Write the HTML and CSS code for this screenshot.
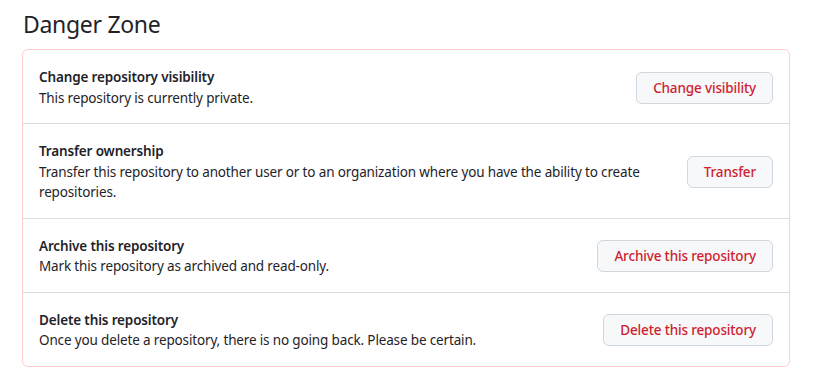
FILE: index.html
```html
<!DOCTYPE html>
<html>
  <head>
    <meta charset="UTF-8">
    <title>Danger Zone</title>
    <link rel="stylesheet" href="styles.css">
  </head>
  <body>
    <div class="settings">
      <h2 class="subhead">Danger Zone</h2>
      <div class="danger-box">
        <div class="danger-row">
          <div class="danger-text">
            <strong>Change repository visibility</strong>
            <p>This repository is currently private.</p>
          </div>
          <button class="btn-danger">Change visibility</button>
        </div>
        <div class="danger-row">
          <div class="danger-text">
            <strong>Transfer ownership</strong>
            <p>Transfer this repository to another user or to an organization where you have the ability to create repositories.</p>
          </div>
          <button class="btn-danger">Transfer</button>
        </div>
        <div class="danger-row">
          <div class="danger-text">
            <strong>Archive this repository</strong>
            <p>Mark this repository as archived and read-only.</p>
          </div>
          <button class="btn-danger">Archive this repository</button>
        </div>
        <div class="danger-row">
          <div class="danger-text">
            <strong>Delete this repository</strong>
            <p>Once you delete a repository, there is no going back. Please be certain.</p>
          </div>
          <button class="btn-danger">Delete this repository</button>
        </div>
      </div>
    </div>
  </body>
</html>
```
FILE: styles.css
```css
html { font-family: 'Noto Sans', sans-serif; }
body {
  margin: 0;
  background: #ffffff;
  color: #1f2328;
  font-size: 13.5px;
  line-height: 20.5px;
  letter-spacing: -0.15px;
}
.settings {
  padding: 6px 23px 0 22px;
}
.subhead {
  margin: 0 0 7px 1px;
  font-size: 23px;
  line-height: 36px;
  font-weight: 400;
  letter-spacing: -0.3px;
}
.danger-box {
  border: 1px solid #ffcecb;
  border-radius: 6px;
}
.danger-row {
  display: flex;
  align-items: center;
  gap: 16px;
  padding: 17px 16px 15px;
  border-top: 1px solid #d8dee4;
}
.danger-row:first-child {
  border-top: none;
}
.danger-text {
  flex: 1;
}
.danger-text strong {
  display: block;
  font-weight: 600;
}
.danger-text p {
  margin: 0;
}
.btn-danger {
  height: 32px;
  padding: 0 16px;
  border: 1px solid #d0d7de;
  border-radius: 6px;
  background-color: #f6f8fa;
  color: #cf222e;
  font-family: inherit;
  font-size: 13.5px;
  font-weight: 500;
  letter-spacing: -0.15px;
  white-space: nowrap;
  cursor: pointer;
}
```
